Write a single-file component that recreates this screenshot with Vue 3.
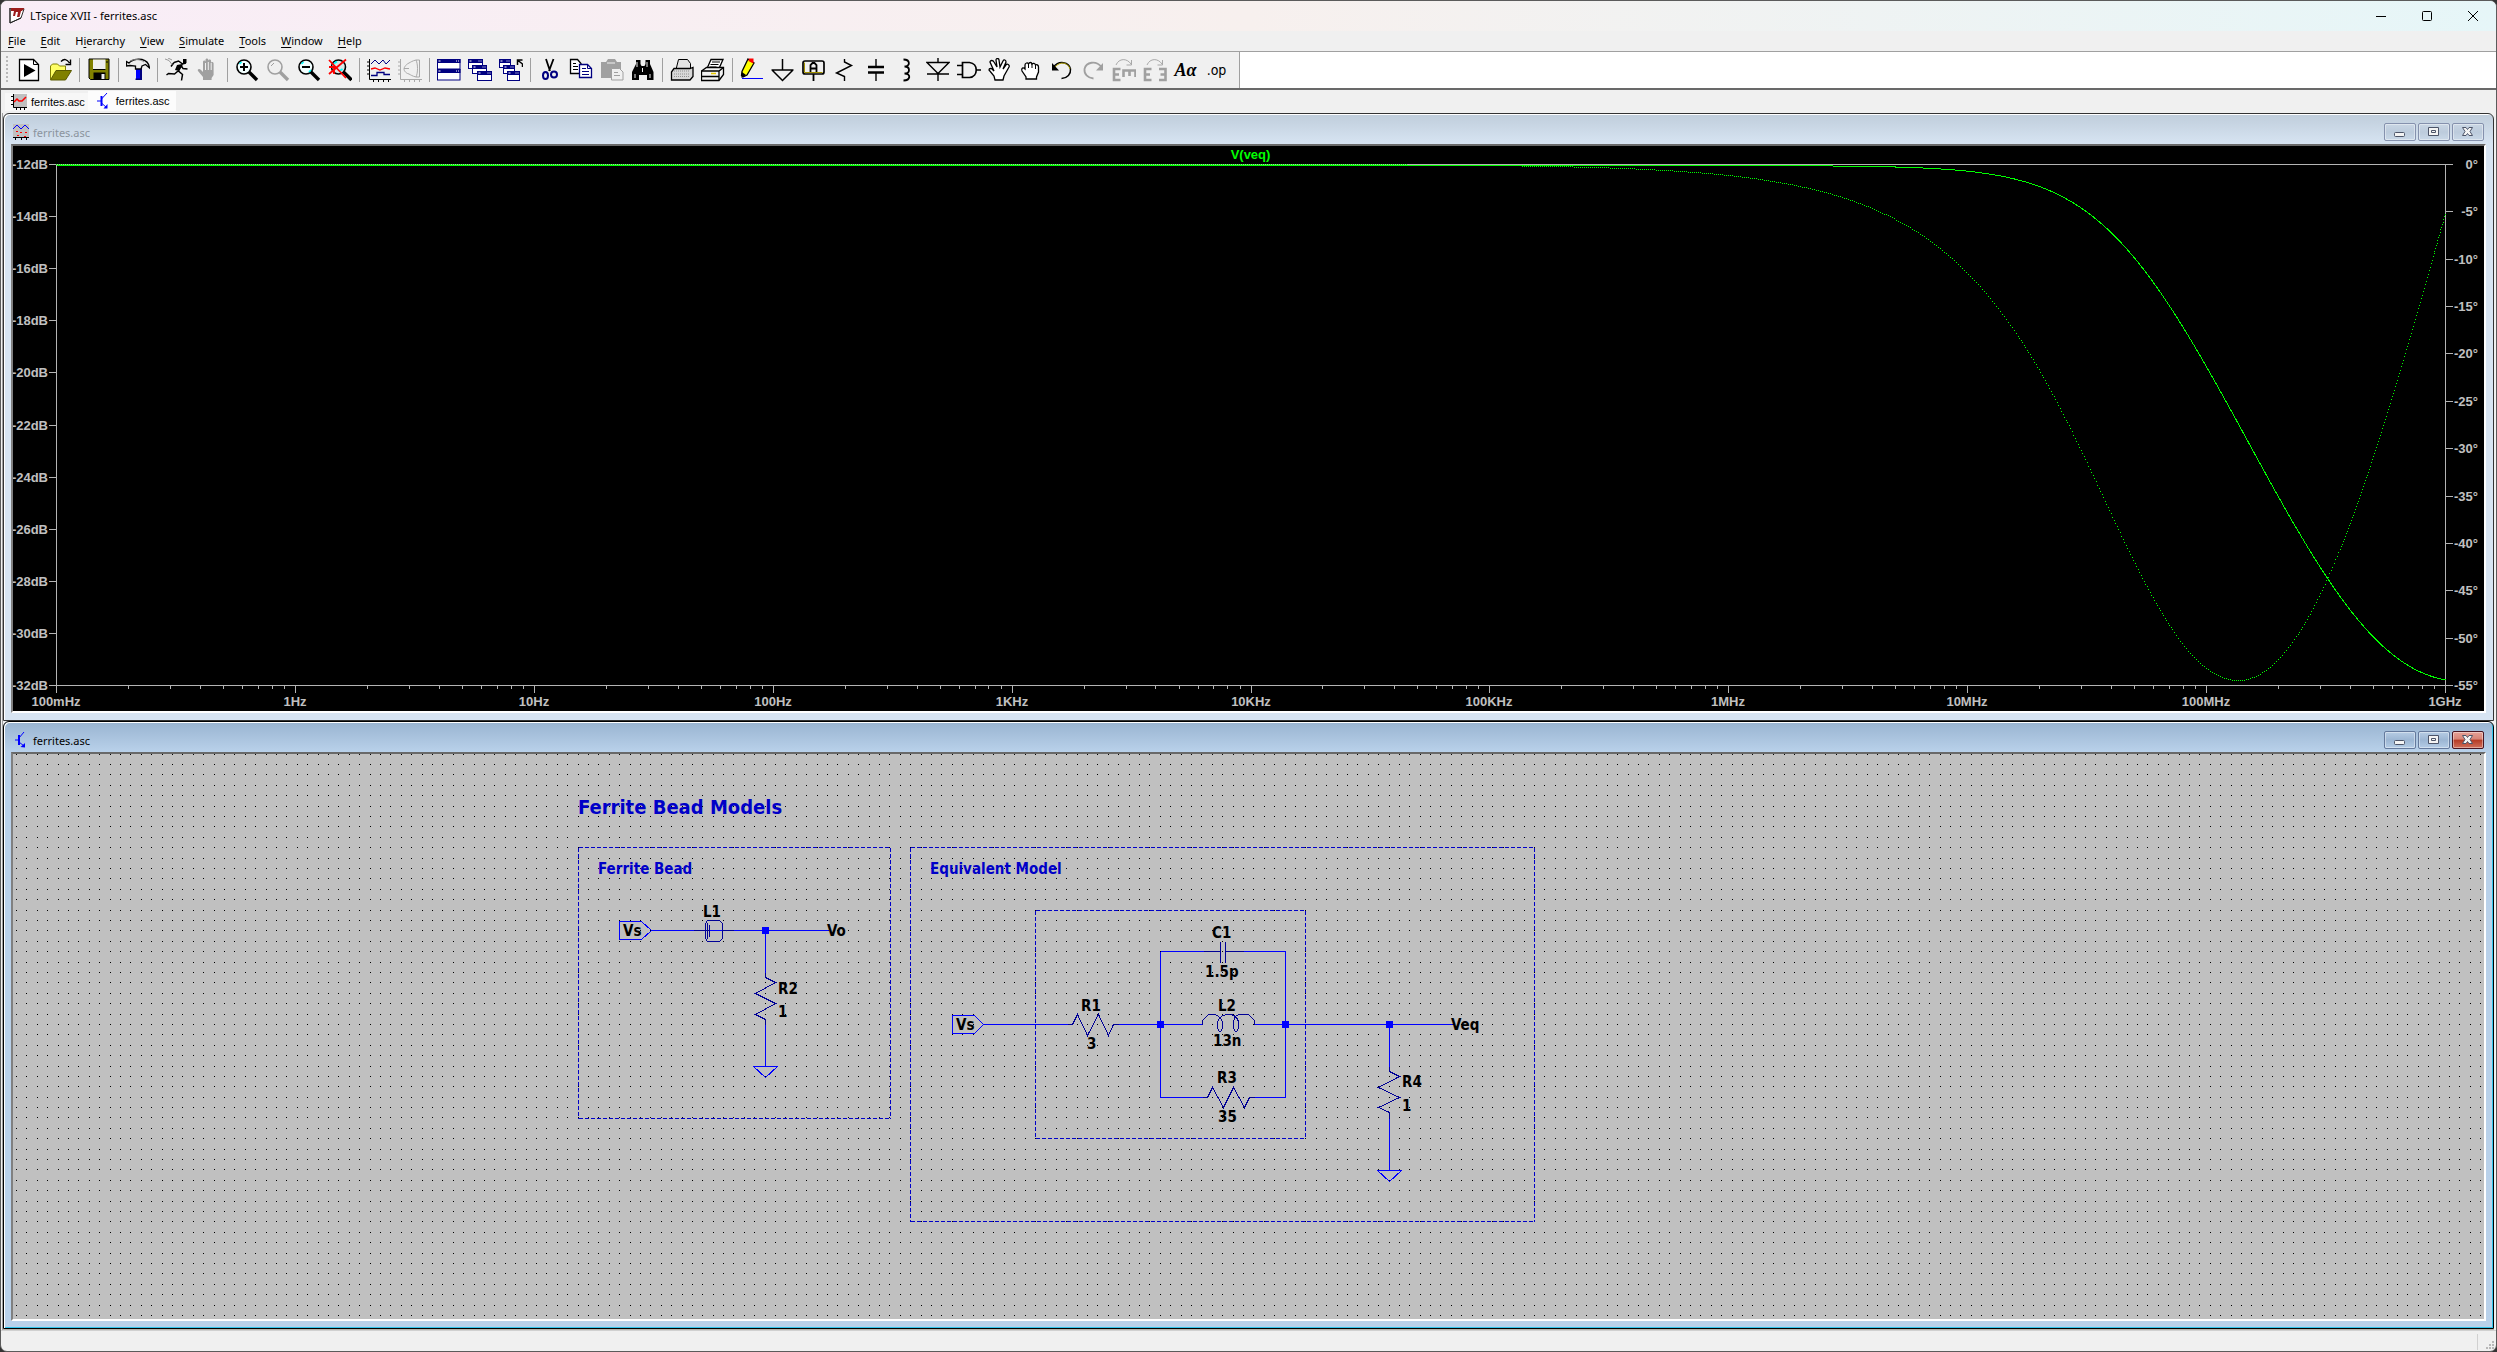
<script setup>
import { ref, reactive, computed, onMounted, onBeforeUnmount } from 'vue'

const menus = [
  ['', 'F', 'ile'], ['', 'E', 'dit'], ['H', 'i', 'erarchy'], ['', 'V', 'iew'],
  ['', 'S', 'imulate'], ['', 'T', 'ools'], ['', 'W', 'indow'], ['', 'H', 'elp'],
]

const lens = (c, inner, glass) =>
  `<circle cx="9" cy="9" r="7" fill="${glass}" stroke="${c}" stroke-width="1.6"/>${inner}<path d="M14 14L22 22" stroke="${c}" stroke-width="3.4"/>`
const win = (x, y, w, h) =>
  `<rect x="${x}" y="${y}" width="${w}" height="${h}" fill="#fff" stroke="#000080"/><rect x="${x}" y="${y}" width="${w}" height="3" fill="#000080" stroke="#000080"/><path d="M${x + 1} ${y + 1.5}h2M${x + w - 4} ${y + 1.5}h1M${x + w - 2} ${y + 1.5}h1" stroke="#fff"/>`

const icons = {
  run: '<path d="M2.5 1.5h14l5 5v16h-19z" fill="#fff" stroke="#000" stroke-width="1.3"/><path d="M16.500 1.500v5h5" fill="none" stroke="#000"/><path d="M7 6l11.500 6.500L7 19z"/>',
  open: '<path d="M2.500 21.500V8l2-2h5l2 2h6v4.500" fill="#ffff66" stroke="#808000"/><path d="M2.500 22L8 12.500h15.500L17.500 22z" fill="#808000" stroke="#5a5a00"/><path d="M13 3.500c3-3 6-2.500 8.500 1.500M22.500 1.500v5h-5" fill="none" stroke="#000" stroke-width="1.400"/>',
  save: '<path d="M2 1h20v20.500H3.500L2 20z" fill="#808000" stroke="#000"/><path d="M6 1.500h12.500v10H6z" fill="#efefef"/><path d="M6 11.500h12.500M19 4h2" stroke="#000"/><path d="M6.500 14.500h12v7h-12z"/><path d="M14.500 16h3v5h-3z" fill="#efefef"/>',
  hammer: '<path d="M10 10h5v12h-5z" fill="#0000ff"/><path d="M14 10h2v12h-2zM9.500 20.500h6v1.500h-6z" fill="#000080"/><path d="M.5 8V3.500L3 5c2-3 8-4.500 13-3.500 4 1 7 4 7.500 8.500l-4-3.500-3.500 1.500-1 3H9.500V8L4 7.500z" fill="#ededed" stroke="#000" stroke-width="1.300"/><path d="M4 3c4-2 10-2 14 1" stroke="#909090" fill="none"/>',
  runner: '<path d="M18 1h3.500v4H18z"/><path d="M9 4.500l4.500-1.500 4 3-4 7 4 3.500-1 6M13 13l-3.500 3-6-.5-2 1.500M9 4.500L6 8.500M16 7l2 3.500 4.500.500M17 6l4-1" fill="none" stroke="#000" stroke-width="1.500"/><path d="M12 7l5-1-3 7-4-1z"/><path d="M0 1l4 1.500 3 4M3 0l4 2" stroke="#999" fill="none"/>',
  hand: '<path d="M7 22v-3l-5-6c-1-2 1.500-3 3-1l2 2V4c0-2 2.500-2 2.500 0V2c0-2 2.800-2 2.800 0v1c0-2 2.800-2 2.800 0v2c0-1.500 2.500-1.500 2.500.5V17l-2 3v2z" fill="#a0a0a0"/><path d="M9.500 5v7M12.300 4v8M15.200 5v7" stroke="#f0f0f0"/>',
  zoomin: lens('#000', '<path d="M9 5v8M5 9h8" stroke="#000" stroke-width="2"/><path d="M4.500 6l2-2" stroke="#0ff" stroke-width="1.600"/>', '#f2ffff'),
  pan: lens('#a0a0a0', '<path d="M5 8l3-3" stroke="#a0a0a0"/>', '#f0f0f0'),
  zoomout: lens('#000', '<path d="M5 9h8" stroke="#000" stroke-width="2"/><path d="M4.500 6l2-2M12 14l2-2" stroke="#0ff" stroke-width="1.600"/>', '#f2ffff'),
  zoomfit: `<g transform="translate(1.500 0)">${lens('#000', '<path d="M4.500 5.500l3-2M10 13l3-2" stroke="#0ff" stroke-width="1.600"/>', '#d8e8e8')}</g><path d="M1 2l17 18M18 1.500L1 16M1 9h5v7" fill="none" stroke="#f00" stroke-width="1.800"/>`,
  plot: '<path d="M2.500 1v20.500H24M0 4h2M0 8h2M0 12h2M0 16h2M6.500 22v2M11.500 22v2M16.500 22v2M21.500 22v2" fill="none" stroke="#000"/><path d="M4 6l4-4 4 4 4-4 3 4 4-4" fill="none" stroke="#000080"/><path d="M4 11l4-1 5 2 5-2 5 1" fill="none" stroke="#f00" stroke-width="1.300"/><path d="M4 17.500h6v-3h7v2h6" fill="none" stroke="#000080" stroke-width="1.300"/>',
  polar: '<path d="M2.500 1v20.500H24M0 4h2M0 8h2M0 12h2M0 16h2M6.500 22v2M11.500 22v2M16.500 22v2M21.500 22v2M18 2h3.500v17H18M18 2c-4 1-5 2-7 3-4 2-5 5-5 6s1 4 5 5c2 1 3 2 7 3M18 2c2 4 2 13 0 17M6 10.500h5" fill="none" stroke="#a8a8a8"/>',
  tile: win(.5, 1.5, 22.5, 9.5) + win(.5, 11.5, 22.5, 10.5),
  cascade: win(.5, 1.5, 14, 9) + win(4.5, 7.5, 14, 8) + win(9.5, 13.5, 14, 9),
  closeall: win(.5, 1.5, 11, 8) + win(4.500, 7.500, 11, 8) + win(8.500, 13.500, 12, 9) + '<path d="M23.500 9V6l-4.500-3.500M18.500 7V2h5" fill="none" stroke="#000" stroke-width="1.500"/>',
  cut: '<path d="M8 1l4 12M15.500 1L11 13" stroke="#000" stroke-width="1.800"/><g fill="none" stroke="#000080" stroke-width="2"><ellipse cx="7.500" cy="17.500" rx="2.500" ry="3.500"/><ellipse cx="16" cy="16.500" rx="3" ry="3"/></g>',
  copy: '<path d="M1.500 1.500h7l3.500 4v10H1.500z" fill="#fff" stroke="#000" stroke-width="1.300"/><path d="M4 5.500h3M4 8.500h5M4 11.500h5" stroke="#000"/><path d="M10.500 6.500h8l4 4v9h-12z" fill="#fff" stroke="#000080" stroke-width="1.300"/><path d="M13 10.500h4M13 13.500h7M13 16.500h7M18.500 6.500v4h4" stroke="#000080" fill="none"/>',
  paste: '<path d="M1 4h5l2-3h7l2 3h4v16H1z" fill="#a0a0a0"/><path d="M7 5h8" stroke="#f0f0f0"/><path d="M11.500 10.500h8l3.500 3.500v8H11.500z" fill="#f0f0f0" stroke="#a0a0a0"/><path d="M14 14.500h4M14 17.500h6" stroke="#a0a0a0"/>',
  find: '<path d="M5 2h4.500v4l1 2h3l1-2V2H19v4l3.500 8v8H16v-5h-8v5H1v-8l4-8z"/><path d="M6 4v5M16 4v5M4 16v4M19 16v4M11.500 10v4" stroke="#ededed"/>',
  print: '<path d="M8.500 1.500h9l3 4v6H6z" fill="#e4e4e4" stroke="#000"/><path d="M4 10.500h16l3-1v9l-3 3.500H1.500v-8z" fill="#d8d8d8" stroke="#000" stroke-width="1.300"/><path d="M4 13h15M4 16h15M4 18.500h15" stroke="#909090" stroke-dasharray="1 1"/>',
  printer: '<path d="M10 1.500h12l-4 9H6z" fill="#fff" stroke="#000" stroke-width="1.300"/><path d="M11 4h8M9.500 6.500h8M8.500 9h7" stroke="#000"/><path d="M.5 13l5-3.500h17v7l-4.500 6H.5z" fill="#f4f4f4" stroke="#000" stroke-width="1.300"/><path d="M.5 13h17.500l4.500-3.500M18 13v9M.5 18.500H18" fill="none" stroke="#000" stroke-width="1.300"/><path d="M10 15.500h5" stroke="#e6c800" stroke-width="1.600"/>',
  pencil: '<path d="M8 1l6 4L7 17l-4 2-1.500-1.500.5-4z" fill="#ff0" stroke="#000" stroke-width="1.300"/><path d="M9 .5h4.500v5L8.500 3z" fill="#f00"/><path d="M2 14l4 3-4.500 3z"/><path d="M2 20.500h21" stroke="#0000ff"/>',
  ground: '<path d="M11.500 1v11M.5 12h22M1 12l10.500 10.500L22 12" fill="none" stroke="#000" stroke-width="1.500"/>',
  label: '<rect x="1" y="3" width="21" height="13" rx="2" fill="#f0f0f0" stroke="#000" stroke-width="1.700"/><path d="M2.500 4.500v10h18" fill="none" stroke="#a09000"/><path d="M11.500 16v7M8.500 14V7l2-2h2l2 2v7M8.500 10.500h6" fill="none" stroke="#000" stroke-width="1.800"/>',
  resistor: '<path d="M11.500 1v3l7 3.500-15 7.500 8 3.500V23" fill="none" stroke="#000" stroke-width="1.400"/>',
  capacitor: '<path d="M12 1v8M12 15v8" stroke="#000" stroke-width="1.400"/><path d="M4 9h16M4 14.500h16" stroke="#000" stroke-width="2.400"/>',
  inductor: '<path d="M8.500 1.500c7 0 7 7 1 7 6 0 6 7 0 7 7 0 6 7-1 7" fill="none" stroke="#000" stroke-width="1.800"/>',
  diode: '<path d="M1 4.500h22L12 15.500zM1 16h22M12 0v4M12 16v7" fill="none" stroke="#000" stroke-width="1.400"/>',
  gate: '<path d="M5.500 4.500h7c9 1 9 14 0 15h-7zM0 7.500h5M0 16.500h5M19 12h5" fill="none" stroke="#000" stroke-width="1.700"/>',
  move: '<path d="M7 22l-1-4-5-6c0-2 3-2 4 0l1 1-4-9c0-2 3-2 4 0l3 5-1-7c0-2 3-2 3 0l1 7 3-6c1-2 3-1 3 1l-3 7 3-4c1-2 4 0 3 2l-5 9-1 4z" fill="#fff" stroke="#000" stroke-width="1.300"/>',
  drag: '<path d="M7 21v-2l-4-6c-1-3 1-4 3-2V7c0-2 3-3 3.500-1 1-2 3-2 3.500 0 1-1 3-1 3.500 1 1-1 3 0 3 2v5l-2 5v2z" fill="#fff" stroke="#000" stroke-width="1.300"/><path d="M9.500 6v4M13 6v4M16.500 7v4" stroke="#000"/>',
  undo: '<path d="M3.500 9C9 2 19 4 20.500 11c.500 5-3 9-9 9.500" fill="none" stroke="#000" stroke-width="1.500"/><path d="M5 9c5-6 13-5 15 2" stroke="#b0a000" fill="none"/><path d="M2 5v7.500h7z"/>',
  redo: '<path d="M20.500 9C15 2 5 4 3.500 11c-.5 5 3 9 9 9.500" fill="none" stroke="#a0a0a0" stroke-width="1.800"/><path d="M22 5v7.500h-7z" fill="#a0a0a0"/>',
  rotate: '<path d="M4 7c3-7 11-7 15-1M19.500 2v5h-5" fill="none" stroke="#a8a8a8"/><path d="M8.500 11H2v11h6.500M2 16.500h5M11.500 19v-6.500h12V19M17.500 13v5" fill="none" stroke="#a0a0a0" stroke-width="2.600"/>',
  mirror: '<path d="M4 7c3-7 11-7 15-1M19.500 2v5h-5" fill="none" stroke="#a8a8a8"/><path d="M8.500 11H2v11h6.500M2 16.500h5M16 11h6.500v11H16M22.500 16.500h-5" fill="none" stroke="#a0a0a0" stroke-width="2.600"/>',
}

const toolGroups = [
  [['run', 'Run'], ['open', 'Open']],
  [['save', 'Save']],
  [['hammer', 'Control Panel']],
  [['runner', 'Start simulation'], ['hand', 'Halt']],
  [['zoomin', 'Zoom in'], ['pan', 'Pan'], ['zoomout', 'Zoom out'], ['zoomfit', 'Zoom full extents']],
  [['plot', 'Autorange'], ['polar', 'Polar view']],
  [['tile', 'Tile windows'], ['cascade', 'Cascade windows'], ['closeall', 'Close all windows']],
  [['cut', 'Cut'], ['copy', 'Copy'], ['paste', 'Paste'], ['find', 'Find']],
  [['print', 'Print preview'], ['printer', 'Print']],
  [['pencil', 'Wire'], ['ground', 'Ground'], ['label', 'Label net'], ['resistor', 'Resistor'],
    ['capacitor', 'Capacitor'], ['inductor', 'Inductor'], ['diode', 'Diode'], ['gate', 'Component'],
    ['move', 'Move'], ['drag', 'Drag'], ['undo', 'Undo'], ['redo', 'Redo'], ['rotate', 'Rotate'],
    ['mirror', 'Mirror'], ['text', 'Text'], ['op', 'SPICE directive']],
]

/* ---------- waveform plot ---------- */
const plotEl = ref(null)
const schemEl = ref(null)
const plot = reactive({ w: 0, h: 0 })
const schem = reactive({ w: 0, h: 0 })
let observer
function measure() {
  plot.w = plotEl.value.clientWidth
  plot.h = plotEl.value.clientHeight
  schem.w = schemEl.value.clientWidth
  schem.h = schemEl.value.clientHeight
}
onMounted(() => {
  measure()
  observer = new ResizeObserver(measure)
  observer.observe(plotEl.value)
  observer.observe(schemEl.value)
})
onBeforeUnmount(() => observer.disconnect())

const area = computed(() => ({ l: 43, t: 18, r: plot.w - 39, b: plot.h - 26 }))

const dbTicks = computed(() => {
  const { t, b } = area.value
  return Array.from({ length: 11 }, (_, i) => ({ y: Math.round(t + ((b - t) * i) / 10), text: `${-12 - 2 * i}dB` }))
})
const degTicks = computed(() => {
  const { t, b } = area.value
  return Array.from({ length: 12 }, (_, i) => ({ y: Math.round(t + ((b - t) * i) / 11), text: `${i ? -5 * i : 0}°` }))
})
const freqNames = ['100mHz', '1Hz', '10Hz', '100Hz', '1KHz', '10KHz', '100KHz', '1MHz', '10MHz', '100MHz', '1GHz']
const freqTicks = computed(() => {
  const { l, r } = area.value
  return freqNames.map((text, i) => ({ x: Math.round(l + ((r - l) * i) / 10), text }))
})
const axes = computed(() => {
  const { l, t, r, b } = area.value
  let d = `M${l} ${t + .5}H${r + 8}M${l - 7} ${b + .5}H${r + 8}M${l + .5} ${t}V${b + 7}M${r + .5} ${t}V${b + 7}`
  for (const k of dbTicks.value) d += `M${l - 7} ${k.y + .5}h7`
  for (const k of degTicks.value) d += `M${r} ${k.y + .5}h8`
  for (const k of freqTicks.value) d += `M${k.x + .5} ${b}v8`
  for (let i = 0; i < 10; i++)
    for (let m = 2; m < 10; m++)
      d += `M${Math.round(l + ((r - l) * (i + Math.log10(m))) / 10) + .5} ${b}v4`
  return d
})

/* Divider response: 3R in series with 1.5p || 13n || 35R, loaded by 1R */
function response(f) {
  const w = 2 * Math.PI * f
  const g = 1 / 35
  const s = w * 1.5e-12 - 1 / (w * 13e-9)
  const m = g * g + s * s
  const re = 4 + g / m
  const im = -s / m
  return { db: -10 * Math.log10(re * re + im * im), deg: (-Math.atan2(im, re) * 180) / Math.PI }
}
const curves = computed(() => {
  const { l, t, r, b } = area.value
  if (r <= l) return { mag: '', phase: '' }
  let mag = ''
  let phase = ''
  let prev = null
  let n = 0
  for (let x = l; x <= r; x++) {
    const p = response(10 ** (-1 + (10 * (x - l)) / (r - l)))
    const y = t + ((-12 - p.db) / 20) * (b - t)
    mag += `${mag ? 'L' : 'M'}${x + .5} ${(y + .5).toFixed(2)}`
    const q = t + (-p.deg / 55) * (b - t)
    const steps = prev === null ? 1 : Math.max(1, Math.round(Math.abs(q - prev)))
    const period = steps > 1 ? 3 : 2
    for (let k = 1; k <= steps; k++) {
      const yy = prev === null ? q : prev + ((q - prev) * k) / steps
      if (n++ % period === 0) phase += `M${x} ${Math.round(yy) + .5}h1`
    }
    prev = q
  }
  return { mag, phase }
})

/* ---------- schematic ---------- */
const pitch = 10.397
const gridRow = computed(() => {
  let d = ''
  for (let x = 3.6; x < schem.w; x += pitch) d += `M${Math.floor(x)} .5h1`
  return d
})
const gridYs = computed(() => {
  const ys = []
  for (let y = .1; y < schem.h; y += pitch) ys.push(Math.floor(y))
  return ys
})
const boxes = [
  { x: 565, y: 93, w: 312, h: 271 },
  { x: 897, y: 93, w: 624, h: 374 },
  { x: 1022, y: 156, w: 270, h: 228 },
]
const wires = [
  'M638 176H752M752 176H815M752 176V218M752 270V312M740 312H764L752 323Z',
  'M606 167H628L638 176L628 185H606Z',
  'M939 261H961L970 270L961 279H939Z',
  'M970 270H1058M1104 270H1189M1241 270H1440M1147 197V343M1272 197V343',
  'M1147 197H1190M1230 197H1272M1147 343H1194M1236 343H1272',
  'M1376 270V312M1376 364V416M1364 416H1388L1376 427Z',
]
const parts = [
  'M680 176H696M709 176H720M694 168V184M696 170V182M694 166H706L709 169V184L706 187H694L692 184V169Z',
  'M752 218V223L762 228L742 239L762 249L742 260L752 265V270',
  'M1054 270H1059L1064 260L1074 281L1085 260L1095 281L1100 270H1105',
  'M1190 197H1207M1207 187V208M1212 187V208M1212 197H1230',
  'M1189 270V266L1195 260H1202C1206 262 1210 266 1209 272C1208 279 1205 279 1204 272C1203 264 1208 260 1216 260C1222 260 1226 265 1225 272C1224 279 1221 279 1220 272C1219 265 1222 260 1227 260H1235L1241 266V270',
  'M1189 343H1194L1199 333L1210 353L1220 333L1231 353L1236 343H1241',
  'M1376 312V317L1386 322L1365 333L1386 343L1365 353L1376 358V364',
]
const nodes = [[752, 176], [1147, 270], [1272, 270], [1376, 270]]
const labels = [
  [610, 182, 'Vs'], [690, 163, 'L1'], [814, 182, 'Vo'], [765, 240, 'R2'], [765, 263, '1'],
  [943, 276, 'Vs'], [1068, 257, 'R1'], [1074, 295, '3'], [1199, 184, 'C1'], [1192, 223, '1.5p'],
  [1205, 257, 'L2'], [1200, 292, '13n'], [1204, 329, 'R3'], [1205, 368, '35'],
  [1438, 276, 'Veq'], [1389, 333, 'R4'], [1389, 357, '1'],
]
</script>

<template>
  <div class="window">
    <header class="titlebar">
      <svg class="logo" width="16" height="17" viewBox="0 0 16 17">
        <path d="M1 0V15L12 10L15 1H5Z" fill="#fff" stroke="#333" stroke-width="1" />
        <path d="M2 0H15.500L13 3H12L10.500 9H8L9 4H7L6 8H4L5 3H2Z" fill="#9c1c1c" />
        <path d="M1 0V15L12 10" fill="none" stroke="#222" />
      </svg>
      <h1>LTspice XVII - ferrites.asc</h1>
      <div class="win-controls">
        <button aria-label="Minimize"><svg width="10" height="10"><path d="M0 5.500h10" /></svg></button>
        <button aria-label="Maximize"><svg width="10" height="10"><rect x=".5" y=".5" width="9" height="9" rx="1" /></svg></button>
        <button aria-label="Close"><svg width="10" height="10"><path d="M0 0l10 10M10 0L0 10" /></svg></button>
      </div>
    </header>

    <nav class="menubar">
      <button v-for="m in menus" :key="m.join('')">{{ m[0] }}<u>{{ m[1] }}</u>{{ m[2] }}</button>
    </nav>

    <div class="toolband">
      <div class="toolbar">
        <span class="gripper"></span>
        <div v-for="(g, i) in toolGroups" :key="i" class="group">
          <button v-for="[name, label] in g" :key="name" :aria-label="label">
            <span v-if="name === 'text'" class="glyph-aa">Aα</span>
            <span v-else-if="name === 'op'" class="glyph-op">.op</span>
            <svg v-else width="24" height="24" viewBox="0 0 24 24" v-html="icons[name]"></svg>
          </button>
        </div>
      </div>
    </div>

    <div class="tabs">
      <button class="tab">
        <svg width="16" height="16">
          <rect x="2" width="14" height="14" fill="#c0c0c0" />
          <path d="M2.500 0V13.500H16M0 2.500h2M0 6.500h2M0 10.500h2M5.500 14v2M9.500 14v2M13.500 14v2" fill="none" stroke="#000" />
          <path d="M3 8l3-3 2 2h3l4-4" fill="none" stroke="#f00" stroke-width="1.500" />
        </svg>
        ferrites.asc
      </button>
      <button class="tab current">
        <svg width="12" height="16">
          <path d="M0 8h4M10 0L4.500 6M4.500 10L10 15" fill="none" stroke="#00f" stroke-width="1" />
          <path d="M4.500 3v10" stroke="#00f" stroke-width="2" /><path d="M10.500 15.500V11L6.500 15.500Z" fill="#00f" />
        </svg>
        ferrites.asc
      </button>
    </div>

    <main class="workspace">
      <section class="pane">
        <div class="pane-title">
          <svg class="pane-icon" width="16" height="16">
            <rect width="16" height="14" fill="#c0c0c0" />
            <path d="M0 5l4-4 4 4 4-4 4 4" fill="none" stroke="#00f" />
            <path d="M3 7.500h2M7 8.500h2M12 8.500h2M4 11.500h2M11 12.500h2" stroke="#f00" />
            <path d="M0 13.500h16M2.500 14v2M8.500 14v2M13.500 14v2" stroke="#000" />
          </svg>
          <h2>ferrites.asc</h2>
          <div class="pane-controls">
            <button aria-label="Minimize"><svg width="12" height="10"><rect x=".5" y="5.500" width="10" height="4" rx="1" /></svg></button>
            <button aria-label="Restore"><svg width="12" height="10"><path d="M.5 .5h10v8h-10zM3.500 3.500h4v2h-4z" /></svg></button>
            <button aria-label="Close"><svg width="12" height="10"><path d="M.5 .5h3.500l1.500 2 1.500-2h3.500L8 4.500l2.500 4H7l-1.500-2-1.500 2H.5L3 4.500z" /></svg></button>
          </div>
        </div>
        <div ref="plotEl" class="client plot">
          <svg v-if="plot.w" :width="plot.w" :height="plot.h">
            <path class="axis" :d="axes" />
            <g class="axis-text">
              <text v-for="k in dbTicks" :key="k.text" :x="area.l - 8" :y="k.y + 5" text-anchor="end">{{ k.text }}</text>
              <text v-for="k in degTicks" :key="k.text" :x="plot.w - 6" :y="k.y + 5" text-anchor="end">{{ k.text }}</text>
              <text v-for="k in freqTicks" :key="k.text" :x="k.x" :y="plot.h - 5" text-anchor="middle">{{ k.text }}</text>
            </g>
            <path class="phase" :d="curves.phase" />
            <path class="mag" :d="curves.mag" />
            <text class="trace-name" :x="(area.l + area.r) / 2" y="13" text-anchor="middle">V(veq)</text>
          </svg>
        </div>
      </section>

      <section class="pane active">
        <div class="pane-title">
          <svg class="pane-icon" width="16" height="16">
            <path d="M2 8h4M11 0L6 6M6 10l5 4" fill="none" stroke="#00f" stroke-width="1" />
            <path d="M6 3v10" stroke="#00f" stroke-width="2" /><path d="M12 15.500V11L7.500 15Z" fill="#00f" />
          </svg>
          <h2>ferrites.asc</h2>
          <div class="pane-controls">
            <button aria-label="Minimize"><svg width="12" height="10"><rect x=".5" y="5.500" width="10" height="4" rx="1" /></svg></button>
            <button aria-label="Restore"><svg width="12" height="10"><path d="M.5 .5h10v8h-10zM3.500 3.500h4v2h-4z" /></svg></button>
            <button class="close" aria-label="Close"><svg width="12" height="10"><path d="M.5 .5h3.500l1.500 2 1.500-2h3.500L8 4.500l2.500 4H7l-1.500-2-1.500 2H.5L3 4.500z" /></svg></button>
          </div>
        </div>
        <div ref="schemEl" class="client schematic">
          <svg v-if="schem.w" :width="schem.w" :height="schem.h">
            <defs><path id="grid-row" :d="gridRow" stroke="#000" shape-rendering="crispEdges" /></defs>
            <use v-for="y in gridYs" :key="y" href="#grid-row" :y="y" />
            <g transform="translate(.5 .5)">
              <path v-for="b in boxes" :key="b.x" class="box" :d="`M${b.x} ${b.y}h${b.w}M${b.x} ${b.y}v${b.h}M${b.x + b.w} ${b.y}v${b.h}M${b.x} ${b.y + b.h}h${b.w}`" />
              <path v-for="d in wires" :key="d" class="wire" :d="d" />
              <path v-for="d in parts" :key="d" class="part" :d="d" />
            </g>
            <rect v-for="n in nodes" :key="n[0]" class="node" :x="n[0] - 3" :y="n[1] - 3" width="7" height="7" />
            <text class="heading" x="565" y="60">Ferrite Bead Models</text>
            <text class="caption" x="585" y="120">Ferrite Bead</text>
            <text class="caption" x="917" y="120">Equivalent Model</text>
            <text v-for="(t, i) in labels" :key="i" class="label" :x="t[0]" :y="t[1]">{{ t[2] }}</text>
          </svg>
        </div>
      </section>
    </main>

    <footer class="status">
      <span class="divider"></span>
      <svg width="10" height="10"><path d="M6 0h2v2H6zM3 3h2v2H3zM6 3h2v2H6zM0 6h2v2H0zM3 6h2v2H3zM6 6h2v2H6z" fill="#b8b8b8" /></svg>
    </footer>
  </div>
</template>

<style>
body { margin: 0; background: #333; }
</style>

<style scoped>
* { box-sizing: border-box; }
.window {
  display: flex;
  flex-direction: column;
  height: 100vh;
  border: 1px solid #5b5b5b;
  border-radius: 7px;
  overflow: hidden;
  background: #f0f0f0;
  color: #000;
  font-family: "Noto Sans", "Open Sans", sans-serif;
  font-size: 11px;
}
button { margin: 0; padding: 0; border: 0; background: none; color: inherit; font: inherit; }
h1, h2 { margin: 0; font-size: 11px; font-weight: 400; }
svg { display: block; flex: none; }

.titlebar {
  display: flex;
  align-items: center;
  height: 30px;
  padding-left: 8px;
  background: linear-gradient(90deg, #f9edf7, #f7f0ee 50%, #e6f6f8);
}
.titlebar h1 { flex: 1; margin: 0 0 2px 5px; }
.win-controls { display: flex; }
.win-controls button { display: grid; place-items: center; width: 46px; height: 30px; }
.win-controls path, .win-controls rect { fill: none; stroke: #000; }

.menubar { display: flex; gap: 15px; height: 20px; padding: 0 0 2px 7px; }
.menubar u { text-underline-offset: 2px; }

.toolband { height: 39px; background: #fff; border-top: 1px solid #a0a0a0; border-bottom: 2px solid #696969; }
.toolbar {
  display: flex;
  align-items: center;
  width: max-content;
  height: 36px;
  padding-right: 7px;
  border-right: 1px solid #a0a0a0;
  background: #f0f0f0;
}
.gripper { width: 2px; height: 28px; margin: 0 5px; background: repeating-linear-gradient(#b8b8b8 0 2px, transparent 2px 4px); }
.group { display: flex; }
.group + .group { padding-left: 3px; margin-left: 4px; border-left: 1px solid #a0a0a0; }
.group button { display: grid; place-items: center; width: 31px; height: 24px; }
.glyph-aa { font: italic bold 18px/24px "Liberation Serif", serif; }
.glyph-op { font: 14px/20px "DejaVu Sans Condensed", "DejaVu Sans", sans-serif; }

.tabs { display: flex; height: 23px; padding-left: 4px; font-family: "Liberation Sans", sans-serif; }
.tab { display: flex; align-items: center; gap: 4px; height: 18px; margin-top: 3px; padding: 0 3px 0 6px; background: #f7f7f7; }
.tab.current { gap: 7px; height: 20px; margin-top: 1px; padding: 0 6px 0 9px; background: #fcfcfc; }

.workspace {
  display: flex;
  flex-direction: column;
  flex: 1;
  min-height: 0;
  margin: 0 2px 0 1px;
  border-left: 1px solid #a0a0a0;
  border-bottom: 1px solid #b8b4ac;
}
.pane {
  display: flex;
  flex-direction: column;
  flex: 1;
  min-height: 0;
  padding: 0 7px 7px;
  border: 1px solid #333;
  border-radius: 6px 6px 0 0;
  box-shadow: inset 1px 1px #fff;
  background: linear-gradient(#bfcddb, #d7e4f2 30px);
}
.pane.active {
  border-color: #000;
  box-shadow: inset 1px 1px #fff, inset -1px -1px #32c5ec;
  background: linear-gradient(#99b4d1, #b9d1ea 30px);
}
.pane-title { display: flex; align-items: center; height: 30px; padding: 6px 2px 0; color: #8b949e; }
.active .pane-title { color: #000; }
.pane-title h2 { flex: 1; margin-left: 4px; }
.pane-controls { display: flex; gap: 2px; }
.pane-controls button {
  display: grid;
  place-items: center;
  width: 32px;
  height: 18px;
  border: 1px solid #8591ad;
  border-radius: 2px;
  box-shadow: inset 0 0 0 1px #ffffff66;
  background: linear-gradient(#c9d6e4, #bccbdc 50%, #c9d8e8);
}
.active .pane-controls button { border-color: #64799c; background: linear-gradient(#b6cce4, #9cb6d3 50%, #b4cce6); }
.active .pane-controls .close { border-color: #481420; background: linear-gradient(#e5a096, #d78476 45%, #b53a24 50%, #d0705c); }
.pane-controls path, .pane-controls rect { fill: #f4f4f4; stroke: #4c5468; }

.client {
  flex: 1;
  min-height: 0;
  overflow: hidden;
  border: 2px solid;
  border-color: #696969 #fff #fff #808080;
}
.plot { background: #000; }
.schematic { background: #c0c0c0; }

.axis { fill: none; stroke: #b4b4b4; shape-rendering: crispEdges; }
.axis-text { fill: #c0c0c0; font: bold 13px "Liberation Sans", sans-serif; }
.trace-name { fill: #00ff00; font: bold 13px "Liberation Sans", sans-serif; }
.mag { fill: none; stroke: #00ff00; shape-rendering: crispEdges; }
.phase { fill: none; stroke: #00ff00; shape-rendering: crispEdges; }

.box { fill: none; stroke: #0000c8; stroke-dasharray: 4 2; shape-rendering: crispEdges; }
.wire { fill: none; stroke: #0000ff; shape-rendering: crispEdges; }
.part { fill: none; stroke: #000096; shape-rendering: crispEdges; }
.node { fill: #0000ff; }
.heading, .caption, .label { font-family: "DejaVu Sans Condensed", "DejaVu Sans", sans-serif; font-weight: 700; font-size: 15px; }
.heading { fill: #0000c8; font-size: 20px; }
.caption { fill: #0000c8; }

.status { display: flex; justify-content: flex-end; align-items: flex-end; height: 21px; border-top: 1px solid #d0d0d0; }
.status .divider { width: 1px; height: 16px; margin: 0 8px 1px 0; background: #d0d0d0; }
</style>
